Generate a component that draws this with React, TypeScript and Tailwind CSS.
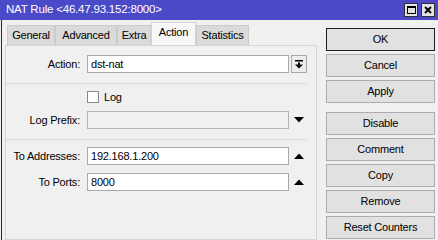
import React from 'react';

const tabs = [
  { label: 'General', w: 'w-[48px]' },
  { label: 'Advanced', w: 'w-[62px]' },
  { label: 'Extra', w: 'w-[34px]' },
  { label: 'Action', w: 'w-[45px]', active: true },
  { label: 'Statistics', w: 'w-[53px]' },
];

const buttons = ['OK', 'Cancel', 'Apply', 'Disable', 'Comment', 'Copy', 'Remove', 'Reset Counters'];

function TriDown() {
  return (
    <svg width="10" height="6" viewBox="0 0 10 6">
      <path d="M0 0H10L5 5.5Z" fill="#000" />
    </svg>
  );
}

function TriUp() {
  return (
    <svg width="10" height="6" viewBox="0 0 10 6">
      <path d="M0 6H10L5 0.5Z" fill="#000" />
    </svg>
  );
}

function Row({ label, value, disabled, side }: { label: string; value?: string; disabled?: boolean; side: React.ReactNode }) {
  return (
    <div className="flex items-center h-[18px]">
      <div className="w-[75px] text-right pr-[1px]">{label}</div>
      <div
        className={`ml-[6px] w-[202px] h-[18px] border flex items-center pl-[3px] ${
          disabled ? 'bg-[#f0f0f0] border-[#b4b4b4]' : 'bg-white border-[#a9a9a9]'
        }`}
      >
        {value}
      </div>
      <div className="ml-[2px] w-[16px] h-[18px] flex items-center justify-center">{side}</div>
    </div>
  );
}

export default function App() {
  return (
    <div
      className="w-[438px] h-[240px] overflow-hidden bg-[#f0f0f0] text-[11px] tracking-[-0.2px] text-black leading-none"
      style={{ fontFamily: '"Liberation Sans", Arial, sans-serif' }}
    >
      {/* Title bar */}
      <div className="h-[20px] bg-[#4a4ac8] flex items-center pl-[6px] pr-[3px]">
        <span className="text-white text-[11.5px]">NAT Rule &lt;46.47.93.152:8000&gt;</span>
        <div className="ml-auto flex gap-[3px]">
          <div className="w-[14px] h-[14px] bg-[#e4e4e4] border border-[#303030] flex items-center justify-center">
            <div className="w-[9px] h-[8px] border border-black border-t-2" />
          </div>
          <div className="w-[14px] h-[14px] bg-[#e4e4e4] border border-[#303030] flex items-center justify-center">
            <svg width="8" height="8" viewBox="0 0 8 8">
              <path d="M1 1L7 7M7 1L1 7" stroke="#000" strokeWidth="2" />
            </svg>
          </div>
        </div>
      </div>

      <div className="flex h-[220px] pl-[1px]">
        {/* left side */}
        <div className="w-[319px] border-l border-[#2a2a2a] flex flex-col">
          <div className="h-[25px] flex items-end pl-[5px]">
            {tabs.map(t => (
              <div
                key={t.label}
                className={`${t.w} flex items-center justify-center border border-b-0 ${
                  t.active ? 'h-[23px] bg-[#f7f7f7] border-[#d4d4d4] pb-[3px]' : 'h-[20px] bg-[#dadada] border-[#cbcbcb]'
                }`}
              >
                {t.label}
              </div>
            ))}
          </div>

          <div className="ml-[3px] w-[312px] flex-1 border border-[#d6d6d6] bg-[#f0f0f0] pt-[9px] pl-[0px]">
            <div className="flex items-center h-[18px]">
              <div className="w-[75px] text-right pr-[1px]">Action:</div>
              <div className="ml-[6px] w-[202px] h-[18px] bg-white border border-[#a9a9a9] flex items-center pl-[3px]">dst-nat</div>
              <div className="ml-[2px] w-[16px] h-[18px] border border-[#a9a9a9] bg-[#ececec] flex items-center justify-center">
                <svg width="8" height="9" viewBox="0 0 8 9">
                  <rect x="0" y="0" width="8" height="1.5" fill="#000" />
                  <rect x="3" y="2.5" width="2" height="2.5" fill="#000" />
                  <path d="M0 4.5H8L4 8.5Z" fill="#000" />
                </svg>
              </div>
            </div>

            <div className="mt-[10px] w-[301px] border-t border-[#d9d9d9]" />

            <div className="mt-[7px] flex items-center h-[12px] pl-[81px]">
              <div className="w-[12px] h-[12px] bg-white border border-[#8a8a8a]" />
              <span className="ml-[5px]">Log</span>
            </div>

            <div className="mt-[8px]">
              <Row label="Log Prefix:" disabled side={<TriDown />} />
            </div>

            <div className="mt-[10px] w-[301px] border-t border-[#d9d9d9]" />

            <div className="mt-[7px]">
              <Row label="To Addresses:" value="192.168.1.200" side={<TriUp />} />
            </div>
            <div className="mt-[8px]">
              <Row label="To Ports:" value="8000" side={<TriUp />} />
            </div>
          </div>
        </div>

        {/* right side buttons */}
        <div className="pl-[6px] pt-[8px] flex flex-col gap-[3px]">
          {buttons.map(b => (
            <div
              key={b}
              className={`w-[109px] h-[23px] flex items-center justify-center border bg-[#e1e1e1] ${
                b === 'OK' ? 'border-[#1e1e1e]' : 'border-[#adadad]'
              } ${b === 'Disable' ? 'mt-[6px]' : ''}`}
            >
              {b}
            </div>
          ))}
        </div>
      </div>
    </div>
  );
}
